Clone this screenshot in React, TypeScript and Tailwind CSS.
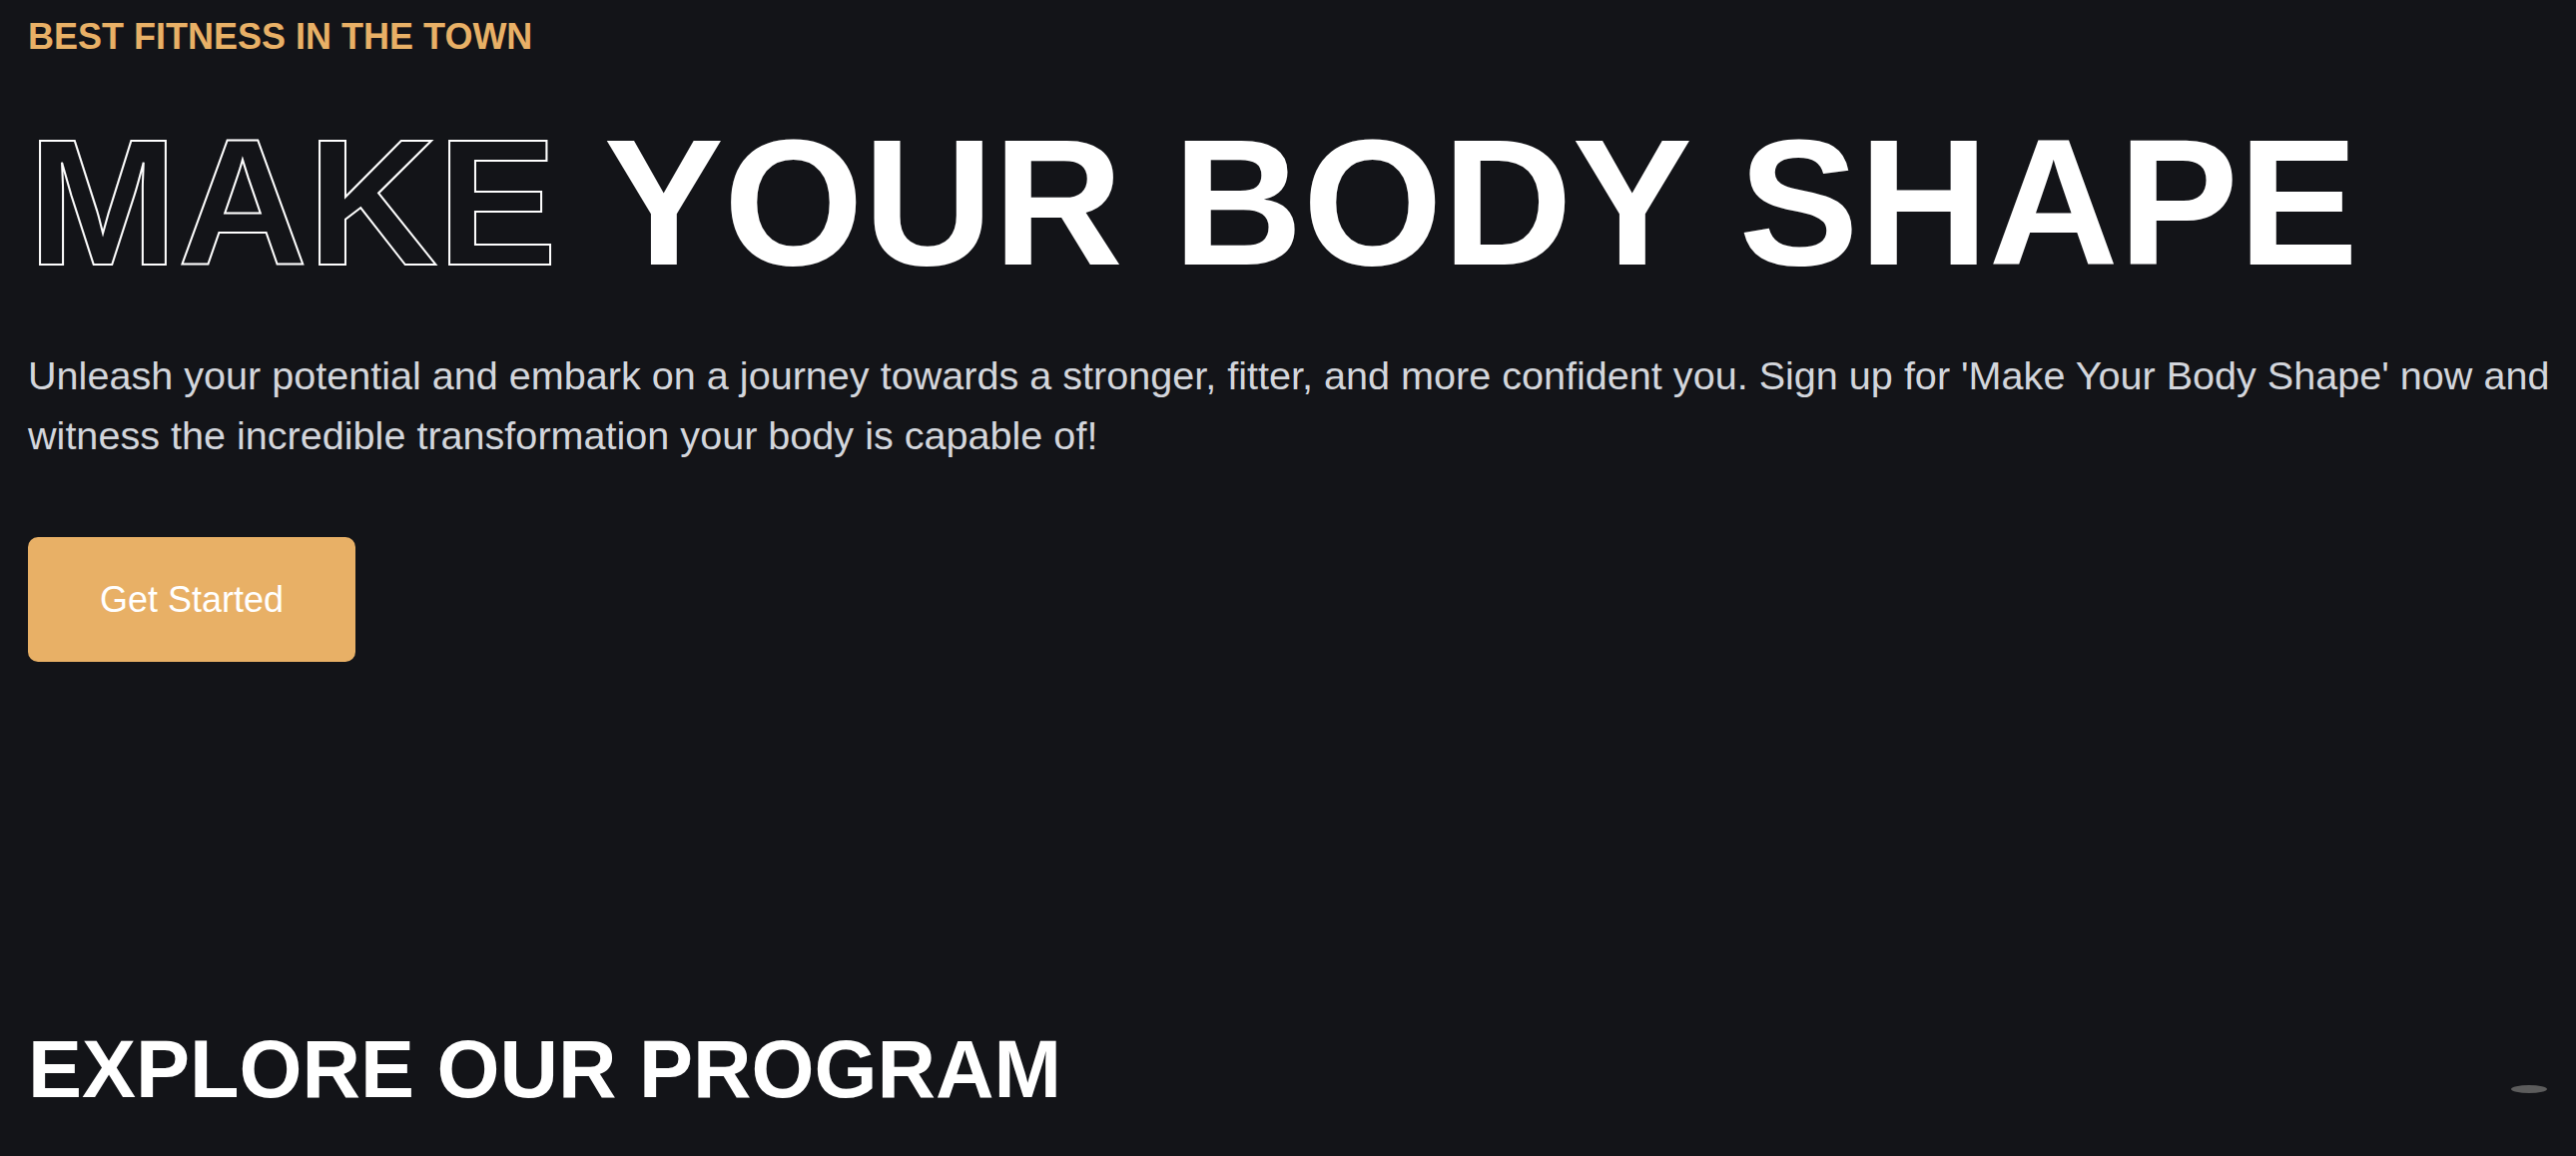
const Hero = () => {
  return (
    <section className="pl-[28px] pr-[16px] pt-[17px]">
      <p className="text-[36px] leading-[40px] font-bold text-[#e8b066] uppercase">
        Best fitness in the town
      </p>

      <h1 className="mt-[42px] text-[180px] leading-[1.15] font-bold text-white whitespace-nowrap">
        <span className="text-transparent [-webkit-text-stroke:2px_white]">MAKE</span> YOUR BODY SHAPE
      </h1>

      <p className="mt-[40px] text-[39.6px] leading-[60px] text-[#d3d6dc]">
        Unleash your potential and embark on a journey towards a stronger, fitter, and more confident you. Sign up for
        'Make Your Body Shape' now and witness the incredible transformation your body is capable of!
      </p>

      <button className="mt-[72px] flex h-[125px] w-[328px] items-center justify-center rounded-[10px] bg-[#e8b066] text-[36px] leading-[45px] text-white">
        Get Started
      </button>
    </section>
  )
}

const Programs = () => {
  return (
    <section className="pl-[28px] pt-[362px]">
      <h2 className="text-[81px] leading-[93px] font-bold text-white">EXPLORE OUR PROGRAM</h2>
    </section>
  )
}

export default function App() {
  return (
    <div className="relative min-h-screen overflow-hidden bg-[#131418] font-['Liberation_Sans',Arial,sans-serif]">
      <Hero />
      <Programs />

      {/* scroll-to-top shadow */}
      <div className="fixed right-[29px] bottom-[63px] h-[8px] w-[36px] rounded-[50%] bg-[#5c5c5c]" />
    </div>
  )
}
